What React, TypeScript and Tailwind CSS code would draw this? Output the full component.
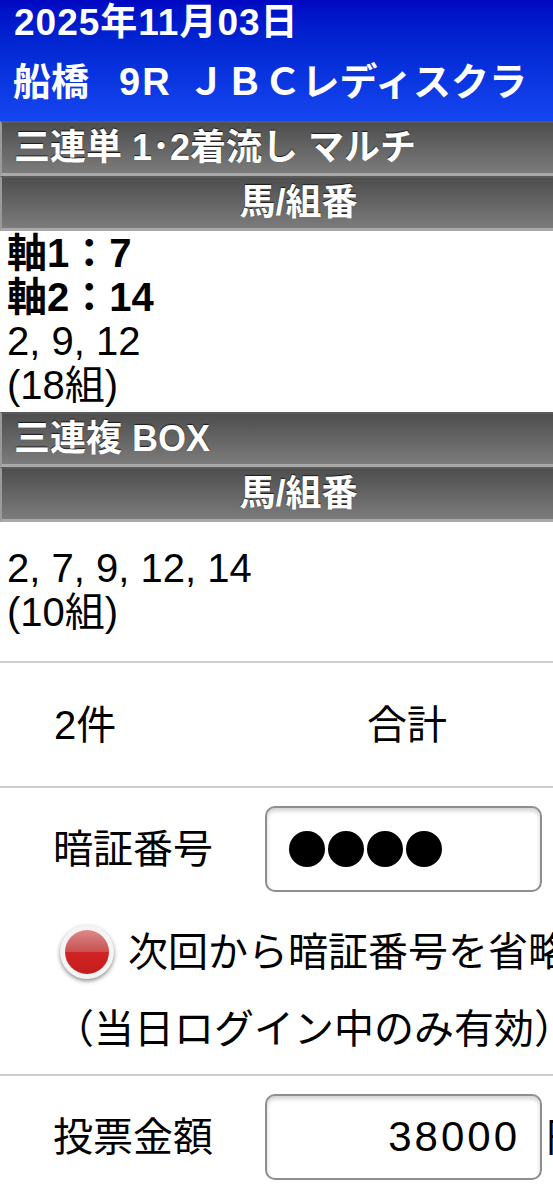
import type { ReactNode } from "react"

function Bar({ children, center }: { children: ReactNode; center?: boolean }) {
  return (
    <div
      className={
        "h-[55px] border-t-2 border-b-[3px] border-l-2 border-t-[#5a5a5a] border-b-[#a9a9a9] border-l-[#9a9a9a] bg-linear-to-b from-[#4e4e4e] to-[#7c7c7c] flex items-center text-white text-[36px] font-bold leading-none whitespace-nowrap [text-shadow:0_-1px_1px_#1a1a1a] " +
        (center ? "justify-center pl-[42px]" : "pl-[12px]")
      }
    >
      {children}
    </div>
  )
}

function Radio() {
  return (
    <div className="w-[54px] h-[54px] shrink-0 rounded-full bg-[#f4f4f4] p-[5px] shadow-[0_2px_4px_rgba(0,0,0,0.45)]">
      <div className="w-full h-full rounded-full bg-[linear-gradient(to_bottom,#dc8a8a_0%,#c85050_50%,#d22424_50%,#c41c1c_100%)]" />
    </div>
  )
}

function Field({ label, children, suffix }: { label: string; children: ReactNode; suffix?: string }) {
  return (
    <div className="flex items-center whitespace-nowrap">
      <div className="w-[265px] shrink-0 pl-[53px] text-[40px] leading-none">{label}</div>
      <div className="w-[277px] h-[86px] shrink-0 rounded-[10px] border-2 border-[#8e8e8e] bg-white shadow-[inset_0_3px_4px_rgba(0,0,0,0.18)] flex items-center">
        {children}
      </div>
      {suffix && <div className="ml-[4px] shrink-0 text-[40px] leading-none">{suffix}</div>}
    </div>
  )
}

export default function App() {
  return (
    <div className="w-[553px] overflow-hidden bg-white text-black font-['Liberation_Sans','Noto_Sans_CJK_JP',sans-serif]">
      <header className="h-[121px] bg-linear-to-b from-[#0008c2] to-[#1646f0] text-white font-bold pt-[1px] pl-[14px] whitespace-nowrap">
        <div className="text-[37px] leading-[44px] tracking-[1px]">2025年11月03日</div>
        <div className="mt-[12px] text-[38px] leading-[50px] -ml-[1px]">
          船橋<span className="ml-[30px] tracking-[2px]">9R</span>
          <span className="ml-[16px]">ＪＢＣレディスクラ</span>
        </div>
      </header>

      <Bar>三連単 1･2着流し マルチ</Bar>
      <Bar center>馬/組番</Bar>

      <section className="pl-[7px] pb-[5px] text-[40px] leading-[44px]">
        <div className="font-bold">軸1：7</div>
        <div className="font-bold">軸2：14</div>
        <div>2, 9, 12</div>
        <div>(18組)</div>
      </section>

      <Bar>三連複 BOX</Bar>
      <Bar center>馬/組番</Bar>

      <section className="pl-[7px] pt-[24px] pb-[27px] text-[40px] leading-[44px]">
        <div>2, 7, 9, 12, 14</div>
        <div>(10組)</div>
      </section>

      <div className="border-t-2 border-[#cfcfcf]" />

      <div className="h-[123px] flex items-center text-[40px] leading-none whitespace-nowrap">
        <div className="w-[367px] shrink-0 pl-[54px]">2件</div>
        <div>合計</div>
      </div>

      <div className="border-t-2 border-[#cfcfcf]" />

      <div className="pt-[18px] pb-[21px]">
        <Field label="暗証番号">
          <div className="flex gap-[3px] pl-[22px]">
            <span className="w-[36px] h-[36px] rounded-full bg-black" />
            <span className="w-[36px] h-[36px] rounded-full bg-black" />
            <span className="w-[36px] h-[36px] rounded-full bg-black" />
            <span className="w-[36px] h-[36px] rounded-full bg-black" />
          </div>
        </Field>

        <div className="mt-[33px] flex items-center pl-[60px] whitespace-nowrap">
          <Radio />
          <span className="ml-[14px] text-[40px] leading-none">次回から暗証番号を省略する</span>
        </div>

        <div className="mt-[26px] pl-[54px] text-[40px] leading-[48px] whitespace-nowrap">
          （当日ログイン中のみ有効）
        </div>
      </div>

      <div className="border-t-2 border-[#cfcfcf]" />

      <div className="pt-[18px] pb-[20px]">
        <Field label="投票金額" suffix="円">
          <div className="w-full text-right pr-[20px] text-[42px] leading-none tracking-[3px]">38000</div>
        </Field>
      </div>

      <div className="border-t-2 border-[#cfcfcf]" />
    </div>
  )
}
